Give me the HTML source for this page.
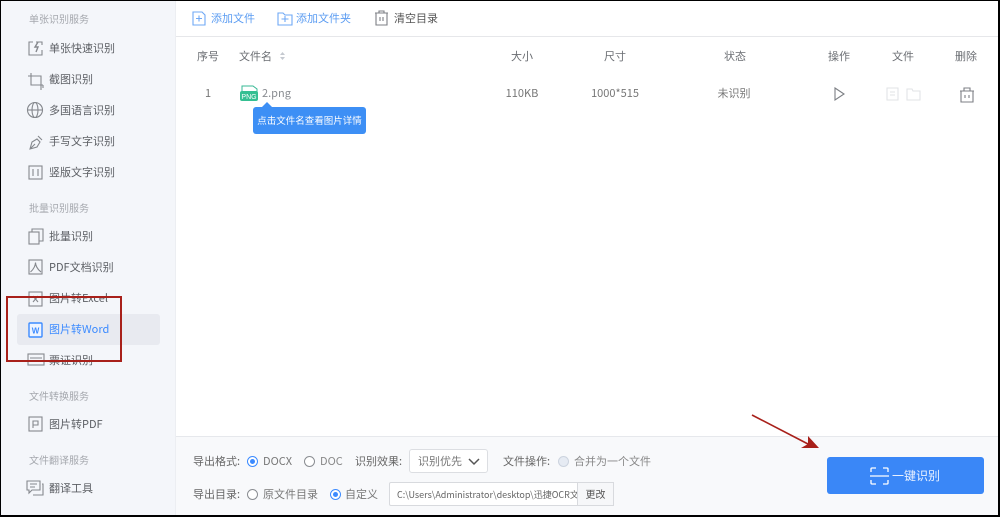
<!DOCTYPE html>
<html lang="zh"><head><meta charset="utf-8"><style>
html,body{margin:0;padding:0}
body{width:1000px;height:517px;position:relative;overflow:hidden;background:#fff;font-family:"Noto Sans CJK SC","Liberation Sans",sans-serif;color:#555}
#w{position:absolute;left:0;top:0;width:1000px;height:517px;filter:blur(.35px)}
.a{position:absolute;white-space:nowrap;line-height:14px}
.side{position:absolute;left:1px;top:1px;width:174px;height:514px;background:#f4f6fa;border-right:1px solid #eceef2}
.h{font-size:10px;color:#a5a8ae;left:29px}
.m{font-size:11px;color:#5c5f64;left:49px}
.th{font-size:11px;color:#6b6e73;text-align:center}
.td{font-size:11px;color:#777;text-align:center}
.f{font-size:11px;color:#666}
svg{position:absolute;overflow:visible}
.i{fill:none;stroke:#85888d;stroke-width:1.1}
.r{position:absolute;width:11px;height:11px;border-radius:50%;box-sizing:border-box;border:1px solid #8a8d92;background:#fff}
.r.on{border-color:#3c8bff}
.r.on:after{content:"";position:absolute;left:2px;top:2px;width:5px;height:5px;border-radius:50%;background:#3c8bff}
</style></head><body>
<div id="w">
<div class="side"></div>
<div class="a" style="left:176px;top:36px;width:824px;height:1px;background:#e6e7ea"></div>
<div class="a" style="left:176px;top:436px;width:824px;height:81px;background:#f8f9fb;border-top:1px solid #e6e8ec;box-sizing:border-box"></div>

<div class="a h" style="top:12px">单张识别服务</div>
<div class="a m" style="top:41px">单张快速识别</div>
<div class="a m" style="top:72px">截图识别</div>
<div class="a m" style="top:103px">多国语言识别</div>
<div class="a m" style="top:134px">手写文字识别</div>
<div class="a m" style="top:165px">竖版文字识别</div>
<div class="a h" style="top:201px">批量识别服务</div>
<div class="a m" style="top:229px">批量识别</div>
<div class="a m" style="top:260px">PDF文档识别</div>
<div class="a m" style="top:291px">图片转Excel</div>
<div class="a" style="left:17px;top:314px;width:143px;height:31px;background:#e8eaf0;border-radius:3px"></div>
<div class="a m" style="top:322px;color:#3c8bff">图片转Word</div>
<div class="a m" style="top:353px">票证识别</div>
<div class="a h" style="top:389px">文件转换服务</div>
<div class="a m" style="top:417px">图片转PDF</div>
<div class="a h" style="top:453px">文件翻译服务</div>
<div class="a m" style="top:481px">翻译工具</div>

<svg style="left:0;top:0" width="176" height="517">
<g class="i">
<path d="M33 42H29V55H42V50M36 42H42V45"/><path d="M38 42L35 47H38L36 52" stroke-width="1.4"/>
<path d="M31 73V85H43M28 76H41V90M43 85V88"/>
<circle cx="35" cy="110" r="7.500"/><ellipse cx="35" cy="110" rx="3" ry="7.500"/><path d="M27.500 110H42.500"/>
<path d="M30 149L32 142L37 139L40 142L37 147ZM30 149L35 144M38 136L42 140"/>
<rect x="29" y="166" width="13" height="13"/><path d="M33 169V176M38 169V176"/>
<rect x="29" y="232" width="10" height="12"/><path d="M32 232V229H43V241H39"/>
<rect x="29" y="260" width="13" height="14"/><path d="M30.500 272C34 269 35.500 265 35.500 262.500C35.500 265 37 269 41 272"/>
<rect x="29" y="292" width="13" height="14"/><path d="M33 296L38 302M38 296L33 302"/>
<rect x="28" y="354" width="16" height="11"/><path d="M30 358H42M30 361H42"/>
<rect x="29" y="417" width="13" height="14"/><path d="M33 421H38V425H33ZM33 421V428"/>
<path d="M27 481H40V490H32L29 493V490H27ZM30 484H37M30 487H35M42 484H43V495H33"/>
</g>
<rect x="29" y="323" width="13" height="14" rx="1" fill="#eef4ff" stroke="#3c8bff" stroke-width="1.4"/>
<text x="35.5" y="333.5" font-size="8" font-weight="bold" fill="#3c8bff" text-anchor="middle" font-family="Liberation Sans">W</text>
</svg>

<svg style="left:0;top:0" width="1000" height="130">
<g fill="none" stroke="#6fa8f5" stroke-width="1.1">
<path d="M193 12H202L205 15V25H193ZM196 18.500H202M199 15.500V21.500"/>
<path d="M278 13H283L285 15H292V25H278ZM281.500 19H288.500M285 16V22"/>
</g>
<g fill="none" stroke="#7c7f84" stroke-width="1.1">
<path d="M375 13H388M379 13V11H384V13M376 13V25H387V13M380 17V21M383 17V21"/>
<path d="M835 88L844 94L835 100Z"/>
<path d="M960 91H974M964 91V88H970V91M961 91V102H973V91M965 95V98M969 95V98"/>
</g>
<g fill="none" stroke="#e2e3e6" stroke-width="1.1">
<path d="M887 88H898V100H887ZM890 92H895M890 95H895"/>
<path d="M907 89H912L913 91H920V100H907Z"/>
</g>
<path d="M280 55L282.500 52L285 55ZM280 57L282.500 60L285 57Z" fill="#c5c9d0"/>
<path d="M242 93V86H253L257 89V93" fill="#fff" stroke="#37b894"/>
<rect x="240" y="91" width="18" height="10" rx="2" fill="#35bf92"/>
<text x="249" y="99" font-size="7" fill="#fff" text-anchor="middle" font-family="Liberation Sans">PNG</text>
<path d="M262 107L267 102L272 107Z" fill="#3d8ff5"/>
</svg>

<div class="a" style="left:211px;top:11px;font-size:11px;color:#5b9cf2">添加文件</div>
<div class="a" style="left:296px;top:11px;font-size:11px;color:#5b9cf2">添加文件夹</div>
<div class="a" style="left:394px;top:11px;font-size:11px;color:#555">清空目录</div>

<div class="a th" style="left:188px;top:49px;width:40px">序号</div>
<div class="a th" style="left:239px;top:49px">文件名</div>
<div class="a th" style="left:492px;top:49px;width:60px">大小</div>
<div class="a th" style="left:585px;top:49px;width:60px">尺寸</div>
<div class="a th" style="left:705px;top:49px;width:60px">状态</div>
<div class="a th" style="left:809px;top:49px;width:60px">操作</div>
<div class="a th" style="left:873px;top:49px;width:60px">文件</div>
<div class="a th" style="left:936px;top:49px;width:60px">删除</div>

<div class="a td" style="left:188px;top:86px;width:40px">1</div>
<div class="a" style="left:262px;top:86px;font-size:11px;color:#8a8d92">2.png</div>
<div class="a td" style="left:492px;top:86px;width:60px">110KB</div>
<div class="a td" style="left:585px;top:86px;width:60px">1000*515</div>
<div class="a td" style="left:704px;top:86px;width:60px">未识别</div>
<div class="a" style="left:253px;top:107px;width:113px;height:27px;background:#3d8ff5;border-radius:3px;color:#fff;font-size:9.500px;line-height:27px;text-align:center">点击文件名查看图片详情</div>

<div class="a f" style="left:193px;top:454px">导出格式:</div>
<div class="r on" style="left:247px;top:456px"></div>
<div class="a f" style="left:263px;top:454px;color:#777">DOCX</div>
<div class="r" style="left:304px;top:456px"></div>
<div class="a f" style="left:320px;top:454px;color:#888">DOC</div>
<div class="a f" style="left:355px;top:454px">识别效果:</div>
<div class="a" style="left:409px;top:449px;width:79px;height:24px;box-sizing:border-box;background:#fff;border:1px solid #dcdee2;border-radius:3px"></div>
<div class="a" style="left:418px;top:454px;font-size:11px;color:#777">识别优先</div>
<svg style="left:468px;top:458px" width="12" height="8"><path d="M1 1L6 6L11 1" fill="none" stroke="#555" stroke-width="1.500"/></svg>
<div class="a f" style="left:503px;top:454px">文件操作:</div>
<div class="r" style="left:558px;top:456px;background:#e6ebf3;border-color:#ccd3de"></div>
<div class="a" style="left:574px;top:454px;font-size:11px;color:#888">合并为一个文件</div>

<div class="a f" style="left:193px;top:487px">导出目录:</div>
<div class="r" style="left:247px;top:489px"></div>
<div class="a f" style="left:263px;top:487px;color:#777">原文件目录</div>
<div class="r on" style="left:330px;top:489px"></div>
<div class="a f" style="left:345px;top:487px;color:#777">自定义</div>
<div class="a" style="left:389px;top:482px;width:225px;height:24px;box-sizing:border-box;background:#fff;border:1px solid #d8dade;border-radius:2px"></div>
<div class="a" style="left:397px;top:488px;width:180px;overflow:hidden;font-size:9px;color:#666">C:\Users\Administrator\desktop\迅捷OCR文字识别</div>
<div class="a" style="left:577px;top:482px;width:37px;height:24px;box-sizing:border-box;background:#f6f7f9;border:1px solid #d8dade;font-size:10px;line-height:22px;text-align:center;color:#555">更改</div>

<div class="a" style="left:827px;top:457px;width:157px;height:37px;background:#3a87f7;border-radius:3px"></div>
<svg style="left:870px;top:467px" width="20" height="18"><path d="M1 5V2Q1 1 2 1H6M13 1H17Q18 1 18 2V5M1 13V16Q1 17 2 17H6M13 17H17Q18 17 18 16V13" fill="none" stroke="#fff" stroke-width="1.300"/><path d="M0 9H19" stroke="#fff" stroke-width="1.300"/></svg>
<div class="a" style="left:892px;top:469px;font-size:12px;color:#eaf2ff">一键识别</div>

<div class="a" style="left:6px;top:296px;width:116px;height:66px;box-sizing:border-box;border:2px solid #a8201a"></div>
<svg style="left:0;top:0" width="1000" height="517"><path d="M752 415L808 444" stroke="#a8201a" stroke-width="1.600"/><path d="M819 448L801 448L808 444L808 436Z" fill="#a8201a"/></svg>
</div>

<div class="a" style="left:0;top:0;width:1000px;height:1px;background:#000"></div>
<div class="a" style="left:0;top:515px;width:1000px;height:2px;background:#000"></div>
<div class="a" style="left:0;top:0;width:1px;height:517px;background:#000"></div>
<div class="a" style="left:998px;top:0;width:2px;height:517px;background:#000"></div>
</body></html>
